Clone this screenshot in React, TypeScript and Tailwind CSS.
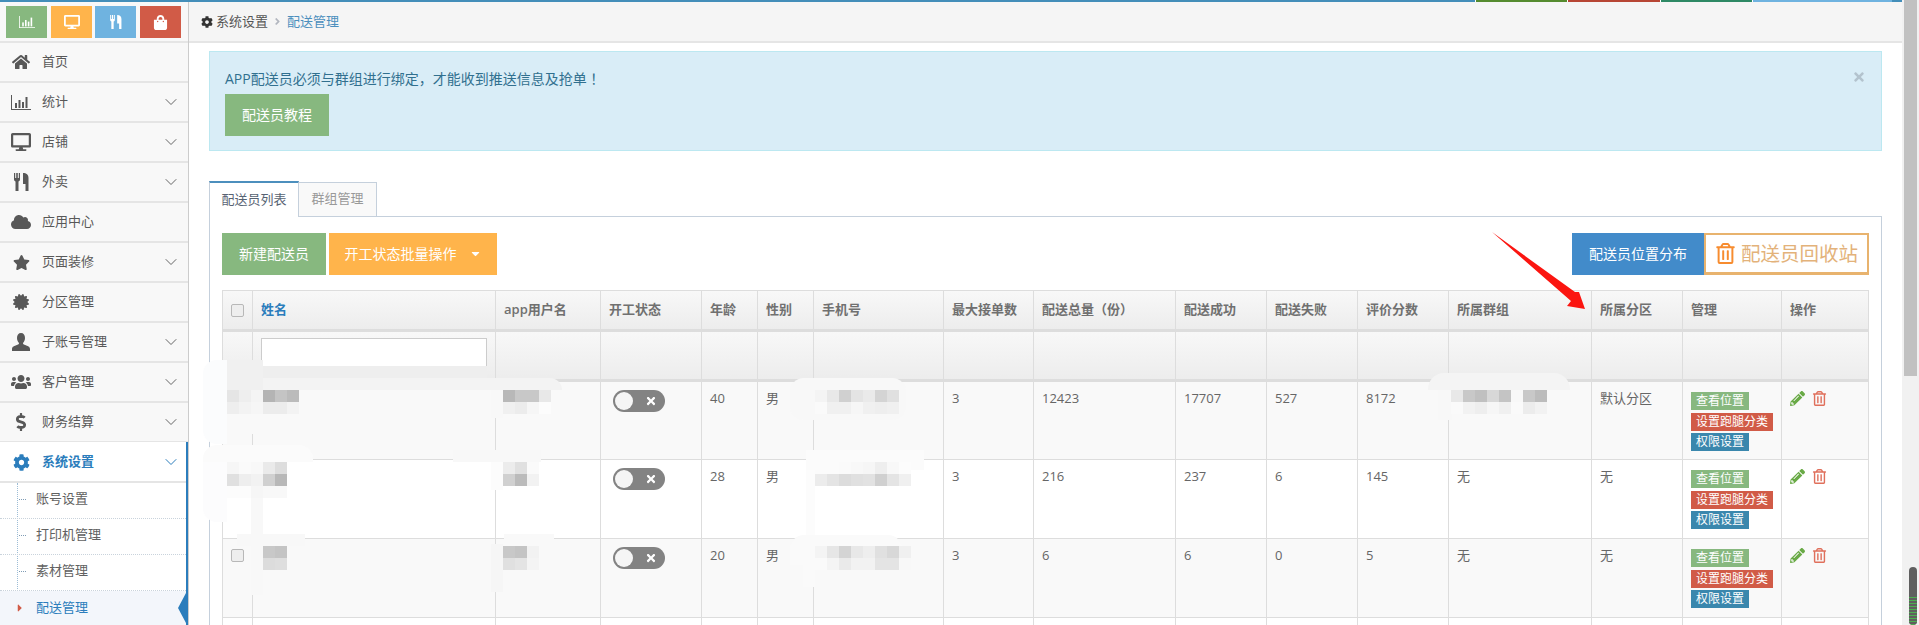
import React from "react";
import { ChevronDown } from "lucide-react";
import {
  FaHome, FaDesktop, FaCloud, FaStar, FaCertificate, FaUsers, FaDollarSign, FaCog, FaShoppingBag, FaPencilAlt, FaRegTrashAlt, FaTimes, FaCaretDown, FaCaretRight, FaAngleRight,
} from "react-icons/fa";

const font = "font-['Open_Sans','Noto_Sans_CJK_SC',sans-serif]";

function ChartIcon({ className }: { className?: string }) {
  return (
    <svg viewBox="0 0 20 15" className={className} fill="currentColor">
      <path d="M0 0h1v14h19v1H0z" />
      <rect x="4" y="8" width="2" height="5" />
      <rect x="7.5" y="5" width="2" height="8" />
      <rect x="11" y="7" width="2" height="6" />
      <rect x="14.5" y="2" width="2" height="11" />
    </svg>
  );
}

function CutleryIcon({ className }: { className?: string }) {
  return (
    <svg viewBox="0 0 15 18" className={className} fill="currentColor">
      <path d="M0 0h1.2v5h1V0h1.6v5h1V0H6v6.5Q6 8 4.500 8.500V18h-3V8.500Q0 8 0 6.500z" />
      <path d="M9 0c3.500 0 5.500 1.500 5.500 5v13h-3v-7H9z" />
    </svg>
  );
}

function UserIcon({ className }: { className?: string }) {
  return (
    <svg viewBox="0 0 18 18" className={className} fill="currentColor">
      <path d="M9 0c2.600 0 4 2 4 5 0 2-.8 3.800-2 5 0 1 .5 1.500 2 2 2.500.9 5 1.500 5 4v2H0v-2c0-2.500 2.500-3.100 5-4 1.500-.5 2-1 2-2-1.200-1.200-2-3-2-5 0-3 1.400-5 4-5z" />
    </svg>
  );
}

const menu = [
  { t: "首页", i: <FaHome className="text-[18px]" /> },
  { t: "统计", i: <ChartIcon className="w-5 h-[15px]" />, c: true },
  { t: "店铺", i: <FaDesktop className="text-[20px]" />, c: true },
  { t: "外卖", i: <CutleryIcon className="w-[15px] h-[18px]" />, c: true },
  { t: "应用中心", i: <FaCloud className="text-[20px]" /> },
  { t: "页面装修", i: <FaStar className="text-[17px]" />, c: true },
  { t: "分区管理", i: <FaCertificate className="text-[16px]" /> },
  { t: "子账号管理", i: <UserIcon className="w-[18px] h-[18px]" />, c: true },
  { t: "客户管理", i: <FaUsers className="text-[20px]" />, c: true },
  { t: "财务结算", i: <FaDollarSign className="text-[18px]" />, c: true },
];

function Sidebar() {
  return (
    <aside className="w-[189px] shrink-0 h-[623px] overflow-hidden bg-[#f8f8f8] border-r border-[#cccccc]">
      <div className="h-[41px] pt-1 pl-[6px] flex gap-[3px] border-b-2 border-[#e5e5e5]">
        <div className="w-[41px] h-8 bg-[#87b87f] text-white flex items-center justify-center"><ChartIcon className="w-4 h-3" /></div>
        <div className="w-[41px] h-8 ml-[1px] bg-[#ffb44b] text-white flex items-center justify-center text-[16px]"><FaDesktop /></div>
        <div className="w-[41px] h-8 bg-[#6fb3e0] text-white flex items-center justify-center"><CutleryIcon className="w-3 h-[14px]" /></div>
        <div className="w-[41px] h-8 ml-[1px] bg-[#d15b47] text-white flex items-center justify-center text-[15px]"><FaShoppingBag /></div>
      </div>
      {menu.map(({ t, i, c }) => (
        <div key={t} className="h-10 flex items-center border-b-2 border-[#e5e5e5] text-[#585858] text-[13px]">
          <span className="w-[42px] flex justify-center text-[#585858]">{i}</span>
          <span>{t}</span>
          {c && <ChevronDown className="ml-auto mr-[7px] w-5 h-5 text-[#666666]" strokeWidth={1.2} />}
        </div>
      ))}
      <div className="relative -mt-[1px] border-r-2 border-[#2b7dbc] bg-white">
        <div className="h-[41px] pt-[1px] flex items-center border-b-2 border-[#e5e5e5] text-[#2b7dbc] text-[13px] font-semibold">
          <span className="w-[42px] flex justify-center text-[17px]"><FaCog /></span>
          <span>系统设置</span>
          <ChevronDown className="ml-auto mr-[5px] w-5 h-5" strokeWidth={1.2} />
        </div>
        <div className="relative">
          <span className="absolute left-[17px] top-0 bottom-0 border-l border-dotted border-[#9dbdd6]" />
          {["账号设置", "打印机管理", "素材管理"].map((t) => (
            <div key={t} className="relative h-9 pb-[3px] flex items-center border-b border-dotted border-[#c9d3dc] pl-9 text-[#616161] text-[13px]">
              <span className="absolute left-[19px] w-[7px] border-t border-dotted border-[#7f9cb5]" />
              {t}
            </div>
          ))}
          <div className="relative h-9 pb-[3px] flex items-center pl-9 text-[#2b7dbc] bg-[#f3f6fb] text-[13px]">
            <FaCaretRight className="absolute left-[14px] text-[#d15b47] text-[12px]" />
            配送管理
            <span className="absolute right-0 top-[2px] border-y-[15px] border-r-[8px] border-y-transparent border-r-[#2b7dbc]" />
          </div>
        </div>
      </div>
    </aside>
  );
}

function Mosaic({ x, y, w = 12, cells }: { x: number; y: number; w?: number; cells: string[][] }) {
  return (
    <div className="absolute flex flex-col" style={{ left: x, top: y }}>
      {cells.map((row, i) => (
        <div key={i} className="flex">
          {row.map((v, j) => (
            <div key={j} className="h-3" style={{ width: w, backgroundColor: `#${v}${v}${v}` }} />
          ))}
        </div>
      ))}
    </div>
  );
}

const cols = ["w-[30px]", "w-[243px]", "w-[105px]", "w-[101px]", "w-[56px]", "w-[56px]", "w-[130px]", "w-[90px]", "w-[142px]", "w-[91px]", "w-[91px]", "w-[91px]", "w-[143px]", "w-[91px]", "w-[99px]", "w-[87px]"];
const heads = ["姓名", "app用户名", "开工状态", "年龄", "性别", "手机号", "最大接单数", "配送总量（份）", "配送成功", "配送失败", "评价分数", "所属群组", "所属分区", "管理", "操作"];

const rows = [
  { age: "40", n: ["12423", "17707", "527", "8172"], group: "", zone: "默认分区" },
  { age: "28", n: ["216", "237", "6", "145"], group: "无", zone: "无" },
  { age: "20", n: ["6", "6", "0", "5"], group: "无", zone: "无" },
];

function Toggle() {
  return (
    <div className="relative w-[52px] h-[22px] rounded-full bg-[#838383]">
      <span className="absolute left-[2px] top-[2px] w-[18px] h-[18px] rounded-full bg-[#f5f5f5]" />
      <FaTimes className="absolute right-[8px] top-[5px] text-white text-[12px]" />
    </div>
  );
}

function Label({ c, children }: { c: string; children: React.ReactNode }) {
  return <div className={`${c} h-[18px] mb-[2.5px] px-[5px] w-fit whitespace-nowrap text-white text-[12px] leading-[18px]`}>{children}</div>;
}

const Box = ({ extra = "" }: { extra?: string }) => (
  <span className={`inline-block w-[13px] h-[13px] rounded-[2px] border border-[#b8b8b8] bg-[#eeeeee] ${extra}`} />
);

const cell = "border border-[#dddddd] px-2 pt-[6px] align-top text-[13px] text-[#666666] leading-[20px]";
const hc = "border border-[#dddddd] border-b-[3px]";

function Table() {
  return (
    <table className="table-fixed w-[1646px] border-collapse mt-[15px]">
      <colgroup>{cols.map((c, i) => <col key={i} className={c} />)}</colgroup>
      <thead>
        <tr className="h-10 bg-gradient-to-b from-[#f8f8f8] to-[#ececec]">
          <th className={`${hc} text-center`}><Box extra="align-middle relative -top-px" /></th>
          {heads.map((h, i) => (
            <th key={h} className={`${hc} px-2 text-left text-[13px] font-semibold whitespace-nowrap [text-spacing-trim:space-all] ${i === 0 ? "text-[#2b7dbc]" : "text-[#707070]"}`}>{h}</th>
          ))}
        </tr>
        <tr className="h-[50px] bg-gradient-to-b from-[#f8f8f8] to-[#ececec]">
          <th className={hc} />
          <th className={`${hc} pl-2 pr-2 align-top`}>
            <div className="h-8 mt-[6px] -mb-2 w-[226px] bg-white border border-[#cccccc]" />
          </th>
          {heads.slice(1).map((h) => <th key={h} className={hc} />)}
        </tr>
      </thead>
      <tbody>
        {rows.map((r, i) => (
          <tr key={i} className={`h-[79px] ${i % 2 === 0 ? "bg-[#f9f9f9]" : "bg-white"}`}>
            <td className="border border-[#dddddd] pt-[5px] align-top text-center">
              {i === 2 && <Box />}
            </td>
            <td className="border border-[#dddddd]" />
            <td className="border border-[#dddddd]" />
            <td className="border border-[#dddddd] pt-[8px] align-top pl-[12px]"><Toggle /></td>
            <td className={cell}>{r.age}</td>
            <td className={`${cell} text-[#555555]`}>男</td>
            <td className="border border-[#dddddd]" />
            <td className={cell}>3</td>
            {r.n.map((v, k) => <td key={k} className={cell}>{v}</td>)}
            <td className={cell}>{r.group}</td>
            <td className={cell}>{r.zone}</td>
            <td className="border border-[#dddddd] px-2 pt-[10px] align-top">
              <Label c="bg-[#87b87f]">查看位置</Label>
              <Label c="bg-[#d15b47]">设置跑腿分类</Label>
              <Label c="bg-[#3a87ad]">权限设置</Label>
            </td>
            <td className="border border-[#dddddd] pl-[8px] pt-[9px] align-top">
              <div className="flex items-center gap-[7px] text-[15px]">
                <FaPencilAlt className="text-[#69aa46]" />
                <FaRegTrashAlt className="text-[#e0705c]" />
              </div>
            </td>
          </tr>
        ))}
        <tr className="h-5 bg-white">
          {cols.map((c, i) => <td key={i} className="border border-[#dddddd]" />)}
        </tr>
      </tbody>
    </table>
  );
}

const smudges = [
  "left-[203px] top-[360px] w-[24px] h-[84px] rounded-l-[14px] bg-[#fbfcfd]",
  "left-[227px] top-[360px] w-[36px] h-[30px] bg-[#f0f0f0]",
  "left-[227px] top-[390px] w-[36px] h-[44px] bg-[#f9f9f9]",
  "left-[263px] top-[366px] w-[224px] h-[14px] bg-[#eeeeee]",
  "left-[263px] top-[378px] w-[299px] h-[12px] rounded-tr-[12px] bg-[#f3f3f3]",
  "left-[203px] top-[445px] w-[110px] h-[17px] rounded-t-[14px] bg-[#fbfbfb]",
  "left-[203px] top-[462px] w-[24px] h-[60px] rounded-bl-[14px] bg-[#fcfcfd]",
  "left-[251px] top-[462px] w-[12px] h-[133px] bg-[#f8f8f8]",
  "left-[237px] top-[534px] w-[68px] h-[12px] bg-[#f8f8f8]",
  "left-[491px] top-[390px] w-[12px] h-[28px] bg-[#f8f8f8]",
  "left-[453px] top-[450px] w-[88px] h-[12px] bg-[#f8f8f8]",
  "left-[491px] top-[462px] w-[12px] h-[28px] bg-[#fcfcfc]",
  "left-[504px] top-[534px] w-[50px] h-[12px] bg-[#f9f9f9]",
  "left-[491px] top-[544px] w-[12px] h-[48px] bg-[#f6f6f6]",
  "left-[790px] top-[378px] w-[116px] h-[42px] rounded-[14px] bg-[#f8f8f8]",
  "left-[806px] top-[450px] w-[118px] h-[20px] bg-[#fbfbfb]",
  "left-[806px] top-[470px] w-[9px] h-[65px] bg-[#fcfcfc]",
  "left-[790px] top-[535px] w-[112px] h-[30px] rounded-t-[14px] bg-[#fafafa]",
  "left-[803px] top-[565px] w-[12px] h-[22px] bg-[#fafafa]",
  "left-[1428px] top-[373px] w-[142px] h-[17px] rounded-t-[16px] bg-[#f4f4f4]",
  "left-[1438px] top-[390px] w-[14px] h-[30px] bg-[#f8f8f8]",
  "left-[279px] top-[472px] w-[5px] h-[1px] bg-[#555555]",
];

export default function App() {
  return (
    <div className={`relative flex w-[1919px] h-[625px] overflow-hidden bg-white ${font}`}>
      <div className="w-[1902px] shrink-0">
        <div className="flex h-[2px]">
          <div className="w-[1475px] bg-[#438eb9]" />
          <div className="w-[91px] ml-[1px] bg-[#558b2f]" />
          <div className="w-[92px] ml-[1px] bg-[#b74635]" />
          <div className="w-[91px] ml-[1px] bg-[#2e8965]" />
          <div className="w-[139px] ml-[1px] bg-[#6fb3e0]" />
          <div className="w-[10px] bg-[#438eb9]" />
        </div>
        <div className="flex">
          <Sidebar />
          <main className="w-[1713px] shrink-0 h-[623px] overflow-hidden relative">
            <div className="h-[41px] bg-[#f5f5f5] border-b-2 border-[#e5e5e5] flex items-center pl-[12px] text-[13px] text-[#555555]">
              <FaCog className="text-[#333333] text-[12px] mr-[3px]" />
              <span>系统设置</span>
              <FaAngleRight className="mx-[4px] text-[#b2b6bf] text-[11px]" />
              <span className="text-[#4c8fbd]">配送管理</span>
            </div>
            <div className="px-[20px] pt-2">
              <div className="relative h-[100px] bg-[#d9edf7] border border-[#bce8f1] pl-[15px] pt-[17px] text-[#31708f] text-[14px] [text-spacing-trim:space-all]">
                <div className="leading-[18px]">APP配送员必须与群组进行绑定，才能收到推送信息及抢单<span className="font-['Noto_Sans_CJK_TC',sans-serif]">！</span></div>
                <div className="mt-[6px] w-[104px] h-[42px] pb-[2px] bg-[#87b87f] text-white flex items-center justify-center">配送员教程</div>
                <FaTimes className="absolute right-[15px] top-[18px] text-[14px] text-[#b3c3ce]" />
              </div>
              <div className="flex mt-[30px] h-[36px] text-[13px]">
                <div className="w-[90px] h-[36px] pb-[1px] bg-white border-t-2 border-t-[#4c8fbd] border-r border-[#c5d0dc] border-l flex items-center justify-center text-[#576373] z-10">配送员列表</div>
                <div className="w-[78px] mt-[1px] h-[34px] pb-[1px] bg-[#f9f9f9] border-t border-r border-[#c5d0dc] flex items-center justify-center text-[#999999]">群组管理</div>
              </div>
              <div className="-mt-[1px] w-[1673px] h-[500px] border border-[#c5d0dc] px-3 pt-4">
                <div className="flex items-center text-[14px] text-white">
                  <div className="w-[104px] h-[42px] pb-[1px] bg-[#87b87f] flex items-center justify-center">新建配送员</div>
                  <div className="w-[168px] ml-[3px] h-[42px] pb-[1px] bg-[#ffb44b] flex items-center justify-center gap-[12px]">
                    开工状态批量操作<FaCaretDown className="text-[13px]" />
                  </div>
                  <div className="ml-auto w-[132px] h-[42px] pb-[1px] bg-[#428bca] flex items-center justify-center">配送员位置分布</div>
                  <div className="w-[165px] h-[42px] border-2 border-b-[3px] border-[#e8b36e] bg-white flex items-center justify-center gap-[5px] text-[#e3b27a] text-[19.5px]">
                    <FaRegTrashAlt className="text-[#f78c2f] text-[21px]" />配送员回收站
                  </div>
                </div>
                <Table />
              </div>
            </div>
          </main>
        </div>
      </div>
      <div className="w-[17px] h-[625px] bg-[#f1f1f1] pl-[2px]">
        <div className="w-[13px] h-[376px] bg-[#c1c1c1]" />
        <div className="mt-[191px] ml-[5px] w-[8px] h-[58px] rounded-full bg-[#5f5f5f] flex items-end overflow-hidden">
          <div className="w-full h-[28px] bg-[repeating-linear-gradient(to_bottom,#4caf50_0px,#4caf50_1px,#5f5f5f_1px,#5f5f5f_3px)]" />
        </div>
      </div>

      {smudges.map((s) => (
        <div key={s} className={`absolute ${s}`} />
      ))}
      <Mosaic x={227} y={390} cells={[["e5", "ee", "f4", "b4", "c4", "bb"], ["ee", "f3", "f6", "ec", "ec", "f3"]]} />
      <Mosaic x={227} y={462} cells={[["f6", "fa", "f8", "ea", "dd"], ["e0", "ee", "f2", "d0", "b8"], ["fc", "fc", "f6", "f8", "f8"]]} />
      <Mosaic x={263} y={546} cells={[["c8", "c4"], ["dc", "de"]]} />
      <Mosaic x={503} y={390} cells={[["b8", "c8", "c8", "e8"], ["f0", "ec", "f6", "fc"]]} />
      <Mosaic x={503} y={462} cells={[["ec", "e0", "fa"], ["d0", "bb", "f2"]]} />
      <Mosaic x={503} y={546} cells={[["c8", "c4", "f2"], ["e0", "e4", "f4"]]} />
      <Mosaic x={815} y={390} cells={[["f4", "e8", "d0", "e4", "ea", "d4", "e0"], ["fa", "f0", "f0", "f6", "f0", "ee", "f0"]]} />
      <Mosaic x={815} y={462} cells={[["fb", "fb", "fa", "f8", "f6", "ee", "f8", "fc"], ["ec", "e4", "dc", "e0", "e2", "d0", "e4", "f0"]]} />
      <Mosaic x={815} y={546} cells={[["f4", "e6", "d4", "e8", "ee", "e0", "d8", "f0"], ["fa", "f4", "ea", "f2", "f2", "e4", "e4", "f8"]]} />
      <Mosaic x={1451} y={390} cells={[["e8", "c8", "c0", "d8", "c4", "f8", "c8", "bc"], ["fa", "f2", "ee", "f6", "f0", "fa", "ec", "f2"]]} />
      <svg className="absolute left-0 top-0 pointer-events-none" width="1919" height="625">
        <polygon points="1492,232 1575,292 1579,292 1585,309 1567,306 1571,301" fill="#fb1510" />
      </svg>
    </div>
  );
}
